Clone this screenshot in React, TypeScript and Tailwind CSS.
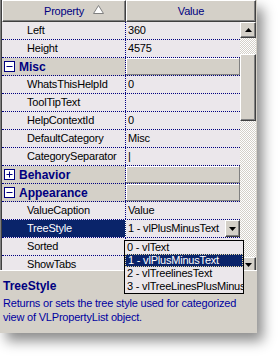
import { Fragment } from "react";

type Row =
  | { cat: string; open: boolean }
  | { name: string; value: string; selected?: boolean };

const rows: Row[] = [
  { name: "Left", value: "360" },
  { name: "Height", value: "4575" },
  { cat: "Misc", open: true },
  { name: "WhatsThisHelpId", value: "0" },
  { name: "ToolTipText", value: "" },
  { name: "HelpContextId", value: "0" },
  { name: "DefaultCategory", value: "Misc" },
  { name: "CategorySeparator", value: "|" },
  { cat: "Behavior", open: false },
  { cat: "Appearance", open: true },
  { name: "ValueCaption", value: "Value" },
  { name: "TreeStyle", value: "1 - vlPlusMinusText", selected: true },
  { name: "Sorted", value: "" },
  { name: "ShowTabs", value: "" },
];

const options = ["0 - vlText", "1 - vlPlusMinusText", "2 - vlTreelinesText", "3 - vlTreeLinesPlusMinus"];

const raised =
  "bg-[#d4d0c8] border-t border-l border-t-white border-l-white border-r border-b border-r-[#404040] border-b-[#404040] shadow-[inset_-1px_-1px_#808080]";

function Arrow({ up }: { up?: boolean }) {
  return (
    <svg width="7" height="4" viewBox="0 0 7 4">
      <path d={up ? "M3.5 0 L7 4 L0 4 Z" : "M0 0 L7 0 L3.5 4 Z"} fill="#000" />
    </svg>
  );
}

function Box({ open }: { open: boolean }) {
  return (
    <svg width="11" height="11" viewBox="0 0 11 11" className="shrink-0">
      <rect x="0.5" y="0.5" width="10" height="10" fill="#fff" stroke="#000080" />
      <path d="M2.5 5.5 H8.5" stroke="#000080" />
      {!open && <path d="M5.5 2.5 V8.5" stroke="#000080" />}
    </svg>
  );
}

export default function App() {
  return (
    <div className="w-[279px] h-[358px] bg-white font-['Liberation_Sans',Arial,sans-serif] text-[11px] tracking-[-0.2px]">
      <div className="relative w-[257px] h-[333px] bg-[#d4d0c8] shadow-[6px_8px_12px_rgba(0,0,0,0.45)] flex flex-col">
        <div className="h-[270px] flex flex-col border-l border-l-[#808080] overflow-hidden">
          <div className="flex flex-col flex-1 border-l border-l-[#404040]">
            {/* header */}
            <div className="h-[22px] flex pr-[1px]">
              <div className={`w-[124px] flex items-center justify-center text-[#000080] ${raised}`}>
                <span className="relative">
                  Property
                  <svg width="11" height="9" viewBox="0 0 11 9" className="absolute left-full ml-[9px] top-[2px]">
                    <path d="M5.5 0.5 L10.5 8.5 L0.5 8.5 Z" fill="#fff" stroke="#808080" />
                  </svg>
                </span>
              </div>
              <div className={`flex-1 flex items-center justify-center text-[#000080] ${raised}`}>Value</div>
            </div>
            <div className="flex flex-1 pr-[1px]">
              {/* rows */}
              <div className="w-[238px] flex flex-col bg-[#ebe7eb]">
                {rows.map((r, i) => (
                  <Fragment key={i}>
                    {"cat" in r ? (
                      <div className="h-[18px] shrink-0 flex bg-[#d4d0c8] border-b border-dotted border-b-[#000080]">
                        <div className="w-[124px] flex items-center gap-[4px] pl-[2px] border-r border-dotted border-r-[#000080] font-bold text-[12px] tracking-normal text-[#000080]">
                          <Box open={r.open} />
                          {r.cat}
                        </div>
                        <div className="flex-1 shadow-[inset_-1px_-1px_#808080,inset_1px_1px_#fff]" />
                      </div>
                    ) : (
                      <div className="h-[18px] shrink-0 flex border-b border-dotted border-b-[#000080] text-black">
                        <div
                          className={`w-[124px] flex items-center pl-[25px] border-r border-dotted ${
                            r.selected ? "bg-[#0a246a] text-white border-r-white" : "border-r-[#000080]"
                          }`}
                        >
                          {r.name}
                        </div>
                        <div className="flex-1 flex items-center pl-[2px] whitespace-nowrap overflow-hidden">
                          <span className="flex-1">{r.value}</span>
                          {r.selected && (
                            <div className={`w-[15px] h-[17px] flex items-center justify-center ${raised}`}>
                              <Arrow />
                            </div>
                          )}
                        </div>
                      </div>
                    )}
                  </Fragment>
                ))}
              </div>
              {/* scrollbar */}
              <div className="w-[16px] flex flex-col">
                <div className={`h-[16px] flex items-center justify-center ${raised}`}>
                  <Arrow up />
                </div>
                <div className="h-[16px] bg-[repeating-conic-gradient(#d4d0c8_0%_25%,#ffffff_0%_50%)] bg-size-[2px_2px]" />
                <div className={`h-[67px] ${raised}`} />
                <div className="flex-1 bg-[repeating-conic-gradient(#d4d0c8_0%_25%,#ffffff_0%_50%)] bg-size-[2px_2px]" />
                <div className={`h-[16px] flex items-center justify-center ${raised}`}>
                  <Arrow />
                </div>
                <div className="h-[1px]" />
              </div>
            </div>
          </div>
        </div>

        {/* description */}
        <div className="flex-1 px-[3px] pt-[8px] text-[#000080] border-t border-t-white">
          <div className="font-bold text-[12px] tracking-normal leading-[14px]">TreeStyle</div>
          <p className="mt-[4px] leading-[13.5px] text-[#0000a0]">
            Returns or sets the tree style used for categorized
            <br />
            view of VLPropertyList object.
          </p>
        </div>

        {/* open combo list */}
        <div className="absolute left-[124px] top-[240px] w-[120px] h-[54px] border border-black bg-[#ebe7eb] overflow-hidden">
          {options.map((o, i) => (
            <div
              key={o}
              className={`h-[13px] flex items-center pl-[2px] whitespace-nowrap ${
                i === 1 ? "bg-[#0a246a] text-white border border-dotted border-[#e8d8a0]" : "text-black"
              }`}
            >
              {o}
            </div>
          ))}
        </div>
      </div>
    </div>
  );
}
